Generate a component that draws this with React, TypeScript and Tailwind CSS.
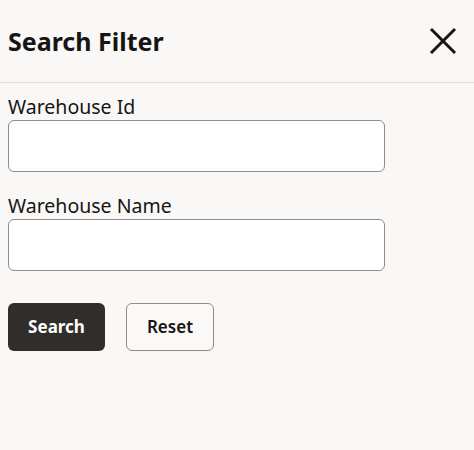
const fields = ['Warehouse Id', 'Warehouse Name']

const App = () => {
  return (
    <div className="min-h-[450px] w-[474px] bg-[#f9f8f6] text-[#161513] font-['Noto_Sans',sans-serif]">
      <div className="flex h-[83px] items-center justify-between border-b border-[#e2e0dd] pl-2 pr-[17px]">
        <h1 className="text-[25px] font-bold leading-none">Search Filter</h1>
        <button aria-label="Close" className="flex h-[28px] w-[28px] items-center justify-center">
          <svg width="28" height="28" viewBox="0 0 28 28" fill="none" stroke="#161513" strokeWidth="3">
            <path d="M2 2 L26 26 M26 2 L2 26" />
          </svg>
        </button>
      </div>

      <div className="flex flex-col px-2 pt-[11px]">
        {fields.map((label) => (
          <div key={label} className="mb-[21px] flex flex-col">
            <label className="text-[19.5px] leading-[26px]">{label}</label>
            <input className="h-[52px] w-[377px] rounded-[6px] border border-[#8f8c89] bg-white px-3 outline-none" />
          </div>
        ))}

        <div className="mt-[11px] flex gap-[21px]">
          <button className="h-[48px] w-[97px] rounded-[6px] bg-[#312d2a] text-[17px] font-bold text-white">
            Search
          </button>
          <button className="h-[48px] w-[88px] rounded-[6px] border border-[#8f8c89] bg-[#faf9f8] text-[17px] font-semibold text-[#161513]">
            Reset
          </button>
        </div>
      </div>
    </div>
  )
}

export default App
